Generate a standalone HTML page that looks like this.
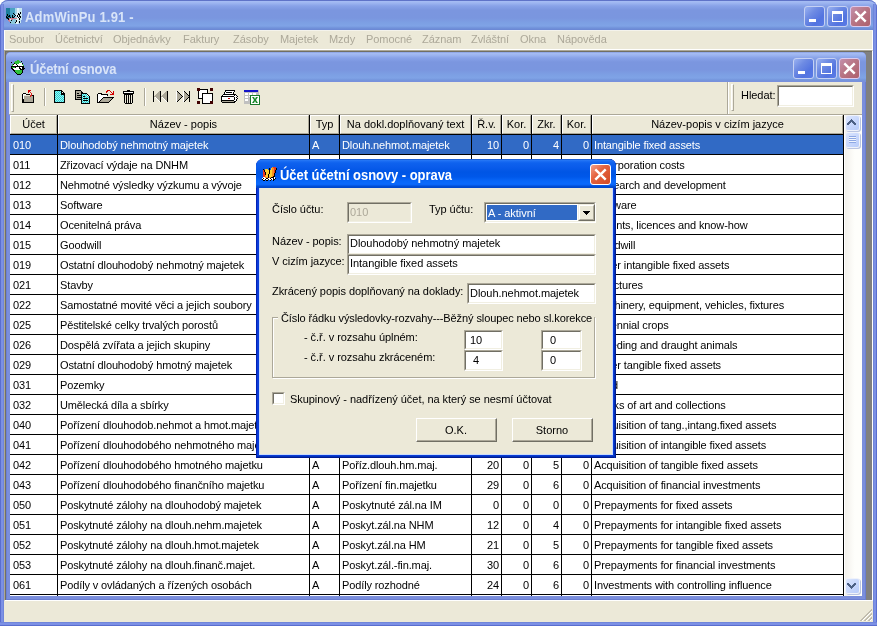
<!DOCTYPE html>
<html><head><meta charset="utf-8">
<style>
*{box-sizing:border-box}
html,body{margin:0;padding:0}
body{width:877px;height:626px;overflow:hidden;position:relative;background:#fff;font-family:"Liberation Sans",sans-serif;font-size:11px}
.a{position:absolute}
.t{position:absolute;white-space:nowrap;line-height:13px;font-size:11px;letter-spacing:-0.05px}
.b{font-weight:bold}
/* main window */
#main{left:0;top:0;width:877px;height:626px;background:#7388DA;border-radius:8px 8px 0 0;overflow:hidden}
#main::after{content:"";position:absolute;left:0;top:0;right:0;height:30px;border-radius:8px 8px 0 0;box-shadow:inset 0 1px 0 #5F73C8;pointer-events:none}
#mtitle{left:0;top:0;width:877px;height:30px;background:linear-gradient(to bottom,#6F86D5 0,#A6BDF4 1px,#9DB5F0 3px,#88A2E8 6px,#7B96DF 10px,#7A96DF 18px,#7DA0E4 23px,#7FA3E6 26px,#7192DA 28px,#6A86D3 30px)}
.lframe{background:linear-gradient(to right,#5D70CE 0,#7A8FE3 1px,#7C90E4 3px,#6E84D8 4px)}
.cap{color:#D8E4F8;font-weight:bold;font-size:13px;line-height:16px;letter-spacing:0;transform:scaleY(1.1);transform-origin:0 12.5px}
.xb{position:absolute;width:21px;height:21px;border-radius:3px;border:1px solid #C5D1F3}
.xb.bl{background:linear-gradient(135deg,#9AB2F1 0,#6E8BE3 35%,#5374E0 70%,#5A7BE6 100%)}
.xb.dx{background:linear-gradient(135deg,#F2A08A 0,#E5633F 40%,#D24A24 100%);border-color:#fff}
.xb.rd{background:linear-gradient(135deg,#C490AC 0,#B87686 45%,#AE606C 100%);border-color:#DCCBEE}
#menu{left:4px;top:30px;width:869px;height:20px;background:#ECE9D8;border-bottom:1px solid #fff;border-top:1px solid #F4F3EC;border-left:1px solid #fff;border-right:1px solid #fff}
.mi{color:#ACA899;top:33px}
#mdi{left:4px;top:50px;width:869px;height:551px;background:#808080;border-top:1px solid #ACA899;border-left:1px solid #ACA899;border-right:1px solid #fff;border-bottom:1px solid #fff;box-shadow:inset 1px 1px 0 #716F64}
/* child */
#child{left:6px;top:52px;width:860px;height:548px;background:#7A8EDC;border-radius:5px 5px 0 0;overflow:hidden;box-shadow:inset 1px 0 0 #6C80D4,inset -1px 0 0 #6A7ED2,inset 0 -1px 0 #6A7ED2}
#ctitle{left:0;top:0;width:860px;height:30px;background:linear-gradient(to bottom,#7D94DC 0,#A6BDF4 1px,#9DB5F0 3px,#88A2E8 6px,#7B96DF 10px,#7A96DF 18px,#7DA0E4 23px,#7FA3E6 26px,#7496DC 28px,#7A8EDC 30px)}
#toolbar{left:9px;top:82px;width:853px;height:33px;background:#ECE9D8;border-left:1px solid #E4EAF8}
.grip{position:absolute;width:3px;border-left:1px solid #fff;border-top:1px solid #fff;border-right:1px solid #ACA899;border-bottom:1px solid #ACA899;background:#F4F2E8}
.sep{position:absolute;width:2px;border-left:1px solid #ACA899;border-right:1px solid #fff}
/* grid */
#grid{left:10px;top:115px;width:852px;height:481px;background:#fff;overflow:hidden}
.hc{position:absolute;top:115px;height:19px;background:#ECE9D8;border-top:1px solid #fff;border-left:1px solid #fff;border-right:1px solid #ACA899;border-bottom:1px solid #ACA899;text-align:center;line-height:16px;color:#000}
.vl{position:absolute;top:0;width:1px;background:#000}
.hl{position:absolute;left:0;height:1px;background:#000}
.cell{position:absolute;white-space:nowrap;line-height:13px;color:#000;letter-spacing:-0.12px}
.r{text-align:right}
/* dialog */
#dlg{left:256px;top:159px;width:360px;height:299px;background:#0A3CD8;border-radius:7px 7px 0 0;overflow:hidden;box-shadow:inset 1px 0 0 #0020B8,inset -1px 0 0 #001A90,inset -2px 0 0 #0030B8,inset 0 -1px 0 #001A90,inset 0 -2px 0 #0030B8}
#dtitle{left:0;top:0;width:360px;height:29px;background:linear-gradient(to bottom,#0841B8 0,#2A7BF5 1px,#1C6EF4 2px,#0E62EE 4px,#0A5CEB 8px,#0055E5 13px,#0058EA 18px,#0866F8 22px,#0A6AFC 25px,#0A62F4 26px,#0050D8 27px,#0044C8 29px)}
#dclient{left:3px;top:29px;width:354px;height:267px;background:#ECE9D8;border:1px solid #CADCFA;border-top:0}
.edit{position:absolute;background:#fff;border-top:1px solid #ACA899;border-left:1px solid #ACA899;border-right:1px solid #fff;border-bottom:1px solid #fff}
.edit>div{position:absolute;left:0;top:0;right:0;bottom:0;border-top:1px solid #716F64;border-left:1px solid #716F64;border-right:1px solid #F1EFE2;border-bottom:1px solid #F1EFE2}
.btn{position:absolute;background:#ECE9D8;border-top:1px solid #fff;border-left:1px solid #fff;border-right:1px solid #716F64;border-bottom:1px solid #716F64}
.btn>div{position:absolute;left:0;top:0;right:0;bottom:0;border-right:1px solid #ACA899;border-bottom:1px solid #ACA899;text-align:center}
.sbb{position:absolute;width:13px;height:14px;border-radius:2px;background:linear-gradient(135deg,#DCE6FE 0,#C9D8FC 50%,#B8CCFA 100%);box-shadow:0 0 0 1px #F0F3FA,1px 1px 0 1px #BAC5E2}
#status{left:4px;top:601px;width:869px;height:21px;background:#ECE9D8}
</style></head><body><div id="wrap" style="position:absolute;left:0;top:0;width:877px;height:626px;overflow:hidden;will-change:transform">
<div id="main" class="a">
  <div id="mtitle" class="a"></div>
  <!-- app icon -->
  <svg class="a" style="left:6px;top:8px" width="16" height="16" viewBox="0 0 16 16" shape-rendering="crispEdges"><rect x="0" y="0" width="4" height="1" fill="#1C7D9B"/><rect x="4" y="0" width="5" height="1" fill="#4BA3C3"/><rect x="9" y="0" width="2" height="1" fill="#A7D4E6"/><rect x="11" y="0" width="2" height="1" fill="#E5F4F8"/><rect x="13" y="0" width="3" height="1" fill="#C6E8F2"/><rect x="0" y="1" width="4" height="1" fill="#1C7D9B"/><rect x="4" y="1" width="5" height="1" fill="#4BA3C3"/><rect x="9" y="1" width="2" height="1" fill="#A7D4E6"/><rect x="11" y="1" width="2" height="1" fill="#E5F4F8"/><rect x="13" y="1" width="3" height="1" fill="#C6E8F2"/><rect x="0" y="2" width="4" height="1" fill="#1C7D9B"/><rect x="4" y="2" width="5" height="1" fill="#4BA3C3"/><rect x="9" y="2" width="2" height="1" fill="#A7D4E6"/><rect x="11" y="2" width="2" height="1" fill="#E5F4F8"/><rect x="13" y="2" width="3" height="1" fill="#C6E8F2"/><rect x="0" y="3" width="4" height="1" fill="#1C7D9B"/><rect x="4" y="3" width="5" height="1" fill="#4BA3C3"/><rect x="9" y="3" width="2" height="1" fill="#A7D4E6"/><rect x="11" y="3" width="2" height="1" fill="#E5F4F8"/><rect x="13" y="3" width="3" height="1" fill="#C6E8F2"/><rect x="0" y="4" width="4" height="1" fill="#1C7D9B"/><rect x="4" y="4" width="5" height="1" fill="#4BA3C3"/><rect x="9" y="4" width="2" height="1" fill="#A7D4E6"/><rect x="11" y="4" width="2" height="1" fill="#E5F4F8"/><rect x="13" y="4" width="1" height="1" fill="#C6E8F2"/><rect x="14" y="4" width="1" height="1" fill="#000"/><rect x="15" y="4" width="1" height="1" fill="#C6E8F2"/><rect x="0" y="5" width="4" height="1" fill="#1C7D9B"/><rect x="4" y="5" width="3" height="1" fill="#4BA3C3"/><rect x="7" y="5" width="1" height="1" fill="#000"/><rect x="8" y="5" width="1" height="1" fill="#4BA3C3"/><rect x="9" y="5" width="2" height="1" fill="#A7D4E6"/><rect x="11" y="5" width="1" height="1" fill="#E5F4F8"/><rect x="12" y="5" width="1" height="1" fill="#000"/><rect x="13" y="5" width="1" height="1" fill="#C6E8F2"/><rect x="14" y="5" width="1" height="1" fill="#000"/><rect x="15" y="5" width="1" height="1" fill="#C6E8F2"/><rect x="0" y="6" width="1" height="1" fill="#1C7D9B"/><rect x="1" y="6" width="1" height="1" fill="#000"/><rect x="2" y="6" width="2" height="1" fill="#1C7D9B"/><rect x="4" y="6" width="4" height="1" fill="#4BA3C3"/><rect x="8" y="6" width="1" height="1" fill="#000"/><rect x="9" y="6" width="1" height="1" fill="#A7D4E6"/><rect x="10" y="6" width="2" height="1" fill="#E5F4F8"/><rect x="12" y="6" width="2" height="1" fill="#000"/><rect x="14" y="6" width="2" height="1" fill="#C6E8F2"/><rect x="0" y="7" width="1" height="1" fill="#1C7D9B"/><rect x="1" y="7" width="1" height="1" fill="#000"/><rect x="2" y="7" width="1" height="1" fill="#1C7D9B"/><rect x="3" y="7" width="1" height="1" fill="#000"/><rect x="4" y="7" width="1" height="1" fill="#1C7D9B"/><rect x="5" y="7" width="1" height="1" fill="#4BA3C3"/><rect x="6" y="7" width="1" height="1" fill="#000"/><rect x="7" y="7" width="2" height="1" fill="#4BA3C3"/><rect x="9" y="7" width="1" height="1" fill="#000"/><rect x="10" y="7" width="1" height="1" fill="#E5F4F8"/><rect x="11" y="7" width="1" height="1" fill="#000"/><rect x="12" y="7" width="1" height="1" fill="#E5F4F8"/><rect x="13" y="7" width="1" height="1" fill="#000"/><rect x="14" y="7" width="2" height="1" fill="#C6E8F2"/><rect x="0" y="8" width="1" height="1" fill="#000"/><rect x="1" y="8" width="1" height="1" fill="#1C7D9B"/><rect x="2" y="8" width="2" height="1" fill="#000"/><rect x="4" y="8" width="1" height="1" fill="#1C7D9B"/><rect x="5" y="8" width="1" height="1" fill="#4BA3C3"/><rect x="6" y="8" width="1" height="1" fill="#000"/><rect x="7" y="8" width="1" height="1" fill="#4BA3C3"/><rect x="8" y="8" width="1" height="1" fill="#000"/><rect x="9" y="8" width="2" height="1" fill="#A7D4E6"/><rect x="11" y="8" width="1" height="1" fill="#000"/><rect x="12" y="8" width="1" height="1" fill="#E5F4F8"/><rect x="13" y="8" width="2" height="1" fill="#000"/><rect x="15" y="8" width="1" height="1" fill="#C6E8F2"/><rect x="0" y="9" width="2" height="1" fill="#000"/><rect x="2" y="9" width="2" height="1" fill="#1C7D9B"/><rect x="4" y="9" width="1" height="1" fill="#000"/><rect x="5" y="9" width="1" height="1" fill="#4BA3C3"/><rect x="6" y="9" width="2" height="1" fill="#000"/><rect x="8" y="9" width="1" height="1" fill="#4BA3C3"/><rect x="9" y="9" width="2" height="1" fill="#A7D4E6"/><rect x="11" y="9" width="1" height="1" fill="#E5F4F8"/><rect x="12" y="9" width="1" height="1" fill="#000"/><rect x="13" y="9" width="1" height="1" fill="#E5F4F8"/><rect x="14" y="9" width="1" height="1" fill="#000"/><rect x="15" y="9" width="1" height="1" fill="#C6E8F2"/><rect x="0" y="10" width="1" height="1" fill="#1C7D9B"/><rect x="1" y="10" width="2" height="1" fill="#000"/><rect x="3" y="10" width="8" height="1" fill="#D08090"/><rect x="11" y="10" width="2" height="1" fill="#E5F4F8"/><rect x="13" y="10" width="1" height="1" fill="#000"/><rect x="14" y="10" width="2" height="1" fill="#C6E8F2"/><rect x="2" y="11" width="1" height="1" fill="#000"/><rect x="3" y="11" width="1" height="1" fill="#D08090"/><rect x="4" y="11" width="1" height="1" fill="#E5F4F8"/><rect x="5" y="11" width="2" height="1" fill="#D08090"/><rect x="7" y="11" width="3" height="1" fill="#8CC8DC"/><rect x="10" y="11" width="3" height="1" fill="#E5F4F8"/><rect x="13" y="11" width="1" height="1" fill="#000"/><rect x="14" y="11" width="2" height="1" fill="#C6E8F2"/><rect x="2" y="12" width="2" height="1" fill="#D08090"/><rect x="4" y="12" width="1" height="1" fill="#8CC8DC"/><rect x="5" y="12" width="1" height="1" fill="#000"/><rect x="6" y="12" width="4" height="1" fill="#8CC8DC"/><rect x="10" y="12" width="1" height="1" fill="#000"/><rect x="11" y="12" width="2" height="1" fill="#E5F4F8"/><rect x="13" y="12" width="2" height="1" fill="#C6E8F2"/><rect x="3" y="13" width="1" height="1" fill="#D08090"/><rect x="4" y="13" width="6" height="1" fill="#8CC8DC"/><rect x="10" y="13" width="1" height="1" fill="#000"/><rect x="11" y="13" width="1" height="1" fill="#E5F4F8"/><rect x="12" y="13" width="1" height="1" fill="#C6E8F2"/><rect x="13" y="13" width="1" height="1" fill="#000"/><rect x="14" y="13" width="1" height="1" fill="#C6E8F2"/><rect x="4" y="14" width="1" height="1" fill="#000"/><rect x="5" y="14" width="4" height="1" fill="#8CC8DC"/><rect x="9" y="14" width="1" height="1" fill="#000"/><rect x="10" y="14" width="2" height="1" fill="#E5F4F8"/><rect x="12" y="14" width="1" height="1" fill="#C6E8F2"/><rect x="13" y="14" width="1" height="1" fill="#000"/><rect x="14" y="14" width="1" height="1" fill="#C6E8F2"/><rect x="5" y="15" width="5" height="1" fill="#8CC8DC"/><rect x="10" y="15" width="2" height="1" fill="#E5F4F8"/><rect x="12" y="15" width="1" height="1" fill="#C6E8F2"/></svg>
  <div class="t cap" style="left:25px;top:10px;letter-spacing:0.18px">AdmWinPu 1.91 -</div>
  <div class="xb bl" style="left:804px;top:6px"><div class="a" style="left:4px;top:12px;width:7px;height:3px;background:#fff"></div></div>
  <div class="xb bl" style="left:827px;top:6px"><div class="a" style="left:4px;top:4px;width:11px;height:11px;border:1px solid #fff;border-top-width:3px"></div></div>
  <div class="xb rd" style="left:850px;top:6px">
    <svg class="a" style="left:3px;top:3px" width="13" height="13" viewBox="0 0 13 13"><path d="M1.3 1.3L11.7 11.7M11.7 1.3L1.3 11.7" stroke="#fff" stroke-width="2.4"/></svg>
  </div>
  <div id="menu" class="a"></div>
  <div class="t mi" style="left:9px">Soubor</div>
  <div class="t mi" style="left:55px">Účetnictví</div>
  <div class="t mi" style="left:113px">Objednávky</div>
  <div class="t mi" style="left:183px">Faktury</div>
  <div class="t mi" style="left:233px">Zásoby</div>
  <div class="t mi" style="left:280px">Majetek</div>
  <div class="t mi" style="left:329px">Mzdy</div>
  <div class="t mi" style="left:366px">Pomocné</div>
  <div class="t mi" style="left:422px">Záznam</div>
  <div class="t mi" style="left:471px">Zvláštní</div>
  <div class="t mi" style="left:520px">Okna</div>
  <div class="t mi" style="left:557px">Nápověda</div>
  <div id="mdi" class="a"></div>
  <div id="status" class="a"></div>
  <div class="a" style="left:0;top:4px;width:4px;height:622px;background:linear-gradient(to right,#5A6ECF 0,#5A6ECF 1px,#7B8FE4 1px,#7D92E6 3px,#7086DA 3px,#7086DA 4px)"></div>
  <div class="a" style="left:873px;top:4px;width:4px;height:622px;background:linear-gradient(to right,#7086DA 0,#7086DA 1px,#7D92E6 1px,#7B8FE4 3px,#5A6ECF 3px,#5A6ECF 4px)"></div>
  <div class="a" style="left:0;top:622px;width:877px;height:4px;background:linear-gradient(to bottom,#7086DA 0,#7086DA 1px,#7D92E6 1px,#7B8FE4 3px,#5A6ECF 3px,#5A6ECF 4px)"></div>
</div>

<div id="child" class="a">
  <div id="ctitle" class="a"></div>
</div>
<!-- child title content -->
<svg class="a" style="left:9px;top:60px" width="16" height="16" viewBox="0 0 16 16" shape-rendering="crispEdges"><rect x="8" y="0" width="2" height="1" fill="#2EC03A"/><rect x="6" y="1" width="5" height="1" fill="#2EC03A"/><rect x="12" y="1" width="1" height="1" fill="#000"/><rect x="2" y="2" width="1" height="1" fill="#000"/><rect x="5" y="2" width="7" height="1" fill="#2EC03A"/><rect x="5" y="3" width="1" height="1" fill="#000"/><rect x="6" y="3" width="4" height="1" fill="#2EC03A"/><rect x="10" y="3" width="3" height="1" fill="#fff"/><rect x="13" y="3" width="1" height="1" fill="#000"/><rect x="3" y="4" width="1" height="1" fill="#2EC03A"/><rect x="4" y="4" width="1" height="1" fill="#000"/><rect x="5" y="4" width="2" height="1" fill="#fff"/><rect x="7" y="4" width="1" height="1" fill="#000"/><rect x="8" y="4" width="5" height="1" fill="#fff"/><rect x="13" y="4" width="1" height="1" fill="#2EC03A"/><rect x="3" y="5" width="1" height="1" fill="#2EC03A"/><rect x="4" y="5" width="4" height="1" fill="#fff"/><rect x="8" y="5" width="1" height="1" fill="#000"/><rect x="9" y="5" width="5" height="1" fill="#fff"/><rect x="14" y="5" width="1" height="1" fill="#2EC03A"/><rect x="2" y="6" width="13" height="1" fill="#000"/><rect x="2" y="7" width="1" height="1" fill="#000"/><rect x="3" y="7" width="3" height="1" fill="#2EC03A"/><rect x="6" y="7" width="1" height="1" fill="#000"/><rect x="7" y="7" width="3" height="1" fill="#fff"/><rect x="10" y="7" width="1" height="1" fill="#000"/><rect x="11" y="7" width="2" height="1" fill="#fff"/><rect x="13" y="7" width="2" height="1" fill="#000"/><rect x="2" y="8" width="2" height="1" fill="#000"/><rect x="4" y="8" width="6" height="1" fill="#fff"/><rect x="10" y="8" width="2" height="1" fill="#000"/><rect x="12" y="8" width="1" height="1" fill="#fff"/><rect x="13" y="8" width="3" height="1" fill="#000"/><rect x="3" y="9" width="2" height="1" fill="#000"/><rect x="5" y="9" width="6" height="1" fill="#fff"/><rect x="11" y="9" width="4" height="1" fill="#000"/><rect x="4" y="10" width="2" height="1" fill="#000"/><rect x="6" y="10" width="7" height="1" fill="#2EC03A"/><rect x="13" y="10" width="1" height="1" fill="#000"/><rect x="5" y="11" width="1" height="1" fill="#000"/><rect x="6" y="11" width="7" height="1" fill="#2EC03A"/><rect x="13" y="11" width="1" height="1" fill="#000"/><rect x="6" y="12" width="1" height="1" fill="#000"/><rect x="7" y="12" width="6" height="1" fill="#2EC03A"/><rect x="13" y="12" width="1" height="1" fill="#000"/><rect x="7" y="13" width="1" height="1" fill="#000"/><rect x="8" y="13" width="4" height="1" fill="#2EC03A"/><rect x="12" y="13" width="1" height="1" fill="#000"/><rect x="8" y="14" width="4" height="1" fill="#000"/></svg>
<div class="t cap" style="left:30px;top:62px;letter-spacing:-0.2px">Účetní osnova</div>
<div class="xb bl" style="left:793px;top:58px"><div class="a" style="left:4px;top:12px;width:7px;height:3px;background:#fff"></div></div>
<div class="xb bl" style="left:816px;top:58px"><div class="a" style="left:4px;top:4px;width:11px;height:11px;border:1px solid #fff;border-top-width:3px"></div></div>
<div class="xb rd" style="left:839px;top:58px">
  <svg class="a" style="left:3px;top:3px" width="13" height="13" viewBox="0 0 13 13"><path d="M1.3 1.3L11.7 11.7M11.7 1.3L1.3 11.7" stroke="#fff" stroke-width="2.4"/></svg>
</div>

<div id="toolbar" class="a">
  <div class="grip" style="left:1px;top:2px;height:28px"></div>
  <div class="sep" style="left:34px;top:6px;height:18px"></div>
  <div class="sep" style="left:134px;top:6px;height:18px"></div>
</div>

<svg class="a" style="left:20px;top:88px" width="18" height="18" viewBox="0 0 18 18" shape-rendering="crispEdges">
  <rect x="4" y="8" width="9" height="6" fill="#ACA899"/>
  <path d="M3 5h3v1h4v1h-6v7h9v-7h1v8h-11v-9h0z" fill="#000"/>
  <rect x="2" y="6" width="1" height="9" fill="#000"/>
  <rect x="3" y="6" width="1" height="5" fill="#fff"/><rect x="4" y="6" width="2" height="1" fill="#fff"/>
  <rect x="12" y="7" width="2" height="1" fill="#000"/>
  <path d="M8 2h3v1h-1v1h-1v1h-1z" fill="#D40000"/>
  <path d="M10 4h1v1h1v3h-1v1h-1v-2h1v-2h-1z" fill="#D40000" opacity="0.85"/>
</svg>
<svg class="a" style="left:54px;top:90px" width="12" height="14" viewBox="0 0 12 14" shape-rendering="crispEdges">
  <defs><pattern id="cy" width="2" height="2" patternUnits="userSpaceOnUse"><rect width="2" height="2" fill="#8CFCFC"/><rect width="1" height="1" fill="#3CC8C8"/><rect x="1" y="1" width="1" height="1" fill="#3CC8C8"/></pattern></defs>
  <path d="M0 0h8v1h1v1h1v1h1v1h0v9h-11z" fill="#000"/>
  <path d="M1 1h6v4h3v7h-9z" fill="url(#cy)"/>
  <rect x="8" y="2" width="1" height="1" fill="#fff"/>
</svg>
<svg class="a" style="left:75px;top:90px" width="16" height="14" viewBox="0 0 16 14" shape-rendering="crispEdges">
  <path d="M0 0h6v1h1v1h1v8h-8z" fill="#000"/>
  <rect x="1" y="1" width="5" height="8" fill="#ACA899"/>
  <rect x="2" y="3" width="2" height="1" fill="#000"/><rect x="2" y="5" width="4" height="1" fill="#000"/><rect x="2" y="7" width="4" height="1" fill="#000"/>
  <path d="M6 3h6v1h1v1h1v1h1v8h-9z" fill="#000"/>
  <rect x="7" y="4" width="5" height="9" fill="url(#cy)"/><rect x="12" y="6" width="2" height="7" fill="url(#cy)"/>
  <rect x="8" y="6" width="2" height="1" fill="#000"/><rect x="8" y="8" width="5" height="1" fill="#000"/><rect x="8" y="10" width="5" height="1" fill="#000"/>
  <rect x="12" y="5" width="1" height="1" fill="#fff"/>
</svg>
<svg class="a" style="left:97px;top:89px" width="19" height="16" viewBox="0 0 19 16" shape-rendering="crispEdges">
  <path d="M1 4h4v1h6v2h-1v-1h-6v1h-2z" fill="#000"/>
  <rect x="0" y="5" width="1" height="9" fill="#000"/>
  <rect x="1" y="5" width="3" height="1" fill="#fff"/><rect x="1" y="6" width="9" height="2" fill="#fff"/><rect x="1" y="8" width="5" height="5" fill="#fff"/>
  <path d="M5 8h12v1h-1v1h-1v1h-1v1h-1v1h-1v1h-11v-1h1v-1h1v-1h1v-1h1v-1h1z" fill="#000"/>
  <path d="M6 9h9v1h-1v1h-1v1h-1v1h-9v-1h1v-1h1v-1h1z" fill="#ACA899"/>
  <path d="M9 2h1v-1h3v1h1v1h1v1h1v-2h1v4h-4v-1h2v-1h-1v-1h-1v-1h-2v1h-1v1h-1z" fill="#D40000"/>
</svg>
<svg class="a" style="left:122px;top:89px" width="13" height="16" viewBox="0 0 13 16" shape-rendering="crispEdges">
  <rect x="5" y="1" width="3" height="1" fill="#000"/>
  <path d="M1 2h11v3h-11z" fill="#000"/>
  <rect x="2" y="3" width="9" height="1" fill="#fff"/>
  <path d="M2 5h9v9h-1v1h-7v-1h-1z" fill="#000"/>
  <rect x="3" y="6" width="7" height="8" fill="#ECE9D8"/>
  <rect x="4" y="6" width="1" height="8" fill="#000"/><rect x="6" y="6" width="1" height="8" fill="#000"/><rect x="8" y="6" width="1" height="8" fill="#000"/>
</svg>
<svg class="a" style="left:153px;top:91px" width="15" height="11" viewBox="0 0 15 11" shape-rendering="crispEdges"><rect x="0" y="0" width="1" height="1" fill="#000"/><rect x="6" y="0" width="1" height="1" fill="#ACA899"/><rect x="7" y="0" width="1" height="1" fill="#000"/><rect x="13" y="0" width="1" height="1" fill="#ACA899"/><rect x="14" y="0" width="1" height="1" fill="#000"/><rect x="0" y="1" width="1" height="1" fill="#000"/><rect x="5" y="1" width="2" height="1" fill="#ACA899"/><rect x="7" y="1" width="1" height="1" fill="#000"/><rect x="12" y="1" width="2" height="1" fill="#ACA899"/><rect x="14" y="1" width="1" height="1" fill="#000"/><rect x="0" y="2" width="1" height="1" fill="#000"/><rect x="4" y="2" width="3" height="1" fill="#ACA899"/><rect x="7" y="2" width="1" height="1" fill="#000"/><rect x="11" y="2" width="3" height="1" fill="#ACA899"/><rect x="14" y="2" width="1" height="1" fill="#000"/><rect x="0" y="3" width="1" height="1" fill="#000"/><rect x="3" y="3" width="4" height="1" fill="#ACA899"/><rect x="7" y="3" width="1" height="1" fill="#000"/><rect x="10" y="3" width="4" height="1" fill="#ACA899"/><rect x="14" y="3" width="1" height="1" fill="#000"/><rect x="0" y="4" width="1" height="1" fill="#000"/><rect x="2" y="4" width="5" height="1" fill="#ACA899"/><rect x="7" y="4" width="1" height="1" fill="#000"/><rect x="9" y="4" width="5" height="1" fill="#ACA899"/><rect x="14" y="4" width="1" height="1" fill="#000"/><rect x="0" y="5" width="1" height="1" fill="#000"/><rect x="1" y="5" width="6" height="1" fill="#ACA899"/><rect x="7" y="5" width="1" height="1" fill="#000"/><rect x="8" y="5" width="6" height="1" fill="#ACA899"/><rect x="14" y="5" width="1" height="1" fill="#000"/><rect x="0" y="6" width="1" height="1" fill="#000"/><rect x="2" y="6" width="1" height="1" fill="#fff"/><rect x="3" y="6" width="4" height="1" fill="#ACA899"/><rect x="7" y="6" width="1" height="1" fill="#000"/><rect x="9" y="6" width="1" height="1" fill="#fff"/><rect x="10" y="6" width="4" height="1" fill="#ACA899"/><rect x="14" y="6" width="1" height="1" fill="#000"/><rect x="0" y="7" width="1" height="1" fill="#000"/><rect x="3" y="7" width="1" height="1" fill="#fff"/><rect x="4" y="7" width="3" height="1" fill="#ACA899"/><rect x="7" y="7" width="1" height="1" fill="#000"/><rect x="10" y="7" width="1" height="1" fill="#fff"/><rect x="11" y="7" width="3" height="1" fill="#ACA899"/><rect x="14" y="7" width="1" height="1" fill="#000"/><rect x="0" y="8" width="1" height="1" fill="#000"/><rect x="4" y="8" width="1" height="1" fill="#fff"/><rect x="5" y="8" width="2" height="1" fill="#ACA899"/><rect x="7" y="8" width="1" height="1" fill="#000"/><rect x="11" y="8" width="1" height="1" fill="#fff"/><rect x="12" y="8" width="2" height="1" fill="#ACA899"/><rect x="14" y="8" width="1" height="1" fill="#000"/><rect x="0" y="9" width="1" height="1" fill="#000"/><rect x="5" y="9" width="1" height="1" fill="#fff"/><rect x="6" y="9" width="1" height="1" fill="#ACA899"/><rect x="7" y="9" width="1" height="1" fill="#000"/><rect x="12" y="9" width="1" height="1" fill="#fff"/><rect x="13" y="9" width="1" height="1" fill="#ACA899"/><rect x="14" y="9" width="1" height="1" fill="#000"/><rect x="0" y="10" width="1" height="1" fill="#000"/><rect x="6" y="10" width="1" height="1" fill="#fff"/><rect x="7" y="10" width="1" height="1" fill="#000"/><rect x="13" y="10" width="1" height="1" fill="#fff"/><rect x="14" y="10" width="1" height="1" fill="#000"/></svg>
<svg class="a" style="left:176px;top:91px" width="14" height="11" viewBox="0 0 14 11" shape-rendering="crispEdges"><rect x="0" y="0" width="1" height="1" fill="#fff"/><rect x="1" y="0" width="1" height="1" fill="#000"/><rect x="7" y="0" width="1" height="1" fill="#fff"/><rect x="8" y="0" width="1" height="1" fill="#000"/><rect x="13" y="0" width="1" height="1" fill="#000"/><rect x="0" y="1" width="1" height="1" fill="#fff"/><rect x="1" y="1" width="1" height="1" fill="#ACA899"/><rect x="2" y="1" width="1" height="1" fill="#000"/><rect x="7" y="1" width="1" height="1" fill="#fff"/><rect x="8" y="1" width="1" height="1" fill="#ACA899"/><rect x="9" y="1" width="1" height="1" fill="#000"/><rect x="13" y="1" width="1" height="1" fill="#000"/><rect x="0" y="2" width="1" height="1" fill="#fff"/><rect x="1" y="2" width="2" height="1" fill="#ACA899"/><rect x="3" y="2" width="1" height="1" fill="#000"/><rect x="7" y="2" width="1" height="1" fill="#fff"/><rect x="8" y="2" width="2" height="1" fill="#ACA899"/><rect x="10" y="2" width="1" height="1" fill="#000"/><rect x="13" y="2" width="1" height="1" fill="#000"/><rect x="0" y="3" width="1" height="1" fill="#fff"/><rect x="1" y="3" width="3" height="1" fill="#ACA899"/><rect x="4" y="3" width="1" height="1" fill="#000"/><rect x="7" y="3" width="1" height="1" fill="#fff"/><rect x="8" y="3" width="3" height="1" fill="#ACA899"/><rect x="11" y="3" width="1" height="1" fill="#000"/><rect x="13" y="3" width="1" height="1" fill="#000"/><rect x="0" y="4" width="1" height="1" fill="#fff"/><rect x="1" y="4" width="4" height="1" fill="#ACA899"/><rect x="5" y="4" width="1" height="1" fill="#000"/><rect x="7" y="4" width="1" height="1" fill="#fff"/><rect x="8" y="4" width="4" height="1" fill="#ACA899"/><rect x="12" y="4" width="2" height="1" fill="#000"/><rect x="0" y="5" width="1" height="1" fill="#fff"/><rect x="1" y="5" width="5" height="1" fill="#ACA899"/><rect x="6" y="5" width="1" height="1" fill="#000"/><rect x="7" y="5" width="1" height="1" fill="#fff"/><rect x="8" y="5" width="5" height="1" fill="#ACA899"/><rect x="13" y="5" width="1" height="1" fill="#000"/><rect x="0" y="6" width="1" height="1" fill="#fff"/><rect x="1" y="6" width="4" height="1" fill="#ACA899"/><rect x="5" y="6" width="1" height="1" fill="#000"/><rect x="7" y="6" width="1" height="1" fill="#fff"/><rect x="8" y="6" width="4" height="1" fill="#ACA899"/><rect x="12" y="6" width="2" height="1" fill="#000"/><rect x="0" y="7" width="1" height="1" fill="#fff"/><rect x="1" y="7" width="3" height="1" fill="#ACA899"/><rect x="4" y="7" width="1" height="1" fill="#000"/><rect x="7" y="7" width="1" height="1" fill="#fff"/><rect x="8" y="7" width="3" height="1" fill="#ACA899"/><rect x="11" y="7" width="1" height="1" fill="#000"/><rect x="13" y="7" width="1" height="1" fill="#000"/><rect x="0" y="8" width="1" height="1" fill="#fff"/><rect x="1" y="8" width="2" height="1" fill="#ACA899"/><rect x="3" y="8" width="1" height="1" fill="#000"/><rect x="7" y="8" width="1" height="1" fill="#fff"/><rect x="8" y="8" width="2" height="1" fill="#ACA899"/><rect x="10" y="8" width="1" height="1" fill="#000"/><rect x="13" y="8" width="1" height="1" fill="#000"/><rect x="0" y="9" width="1" height="1" fill="#fff"/><rect x="1" y="9" width="1" height="1" fill="#ACA899"/><rect x="2" y="9" width="1" height="1" fill="#000"/><rect x="7" y="9" width="1" height="1" fill="#fff"/><rect x="8" y="9" width="1" height="1" fill="#ACA899"/><rect x="9" y="9" width="1" height="1" fill="#000"/><rect x="13" y="9" width="1" height="1" fill="#000"/><rect x="0" y="10" width="1" height="1" fill="#fff"/><rect x="1" y="10" width="1" height="1" fill="#000"/><rect x="7" y="10" width="1" height="1" fill="#fff"/><rect x="8" y="10" width="1" height="1" fill="#000"/><rect x="13" y="10" width="1" height="1" fill="#000"/></svg>
<svg class="a" style="left:197px;top:88px" width="17" height="17" viewBox="0 0 17 17" shape-rendering="crispEdges">
  <rect x="1" y="1" width="9" height="9" fill="#fff" stroke="#000" stroke-width="1" transform="translate(0.5 0.5)" shape-rendering="auto"/>
  <rect x="5" y="5" width="10" height="10" fill="#fff" stroke="#000" stroke-width="1" transform="translate(0.5 0.5)" shape-rendering="auto"/>
  <rect x="0" y="0" width="3" height="3" fill="#400000"/><rect x="13" y="0" width="3" height="3" fill="#400000"/>
  <rect x="0" y="13" width="3" height="3" fill="#400000"/><rect x="13" y="13" width="3" height="3" fill="#400000"/>
</svg>
<svg class="a" style="left:221px;top:90px" width="17" height="13" viewBox="0 0 17 13" shape-rendering="crispEdges"><rect x="4" y="0" width="10" height="1" fill="#000"/><rect x="4" y="1" width="1" height="1" fill="#000"/><rect x="5" y="1" width="8" height="1" fill="#fff"/><rect x="13" y="1" width="1" height="1" fill="#000"/><rect x="3" y="2" width="1" height="1" fill="#000"/><rect x="4" y="2" width="1" height="1" fill="#fff"/><rect x="5" y="2" width="6" height="1" fill="#000"/><rect x="11" y="2" width="1" height="1" fill="#fff"/><rect x="12" y="2" width="1" height="1" fill="#000"/><rect x="3" y="3" width="1" height="1" fill="#000"/><rect x="4" y="3" width="8" height="1" fill="#fff"/><rect x="12" y="3" width="1" height="1" fill="#000"/><rect x="2" y="4" width="13" height="1" fill="#000"/><rect x="1" y="5" width="1" height="1" fill="#000"/><rect x="2" y="5" width="11" height="1" fill="#fff"/><rect x="13" y="5" width="1" height="1" fill="#000"/><rect x="14" y="5" width="1" height="1" fill="#fff"/><rect x="15" y="5" width="1" height="1" fill="#000"/><rect x="0" y="6" width="13" height="1" fill="#000"/><rect x="13" y="6" width="3" height="1" fill="#fff"/><rect x="16" y="6" width="1" height="1" fill="#000"/><rect x="0" y="7" width="1" height="1" fill="#000"/><rect x="1" y="7" width="12" height="1" fill="#fff"/><rect x="13" y="7" width="1" height="1" fill="#000"/><rect x="14" y="7" width="1" height="1" fill="#fff"/><rect x="15" y="7" width="1" height="1" fill="#000"/><rect x="0" y="8" width="1" height="1" fill="#000"/><rect x="1" y="8" width="6" height="1" fill="#fff"/><rect x="7" y="8" width="2" height="1" fill="#C00000"/><rect x="9" y="8" width="4" height="1" fill="#fff"/><rect x="13" y="8" width="1" height="1" fill="#000"/><rect x="14" y="8" width="2" height="1" fill="#fff"/><rect x="16" y="8" width="1" height="1" fill="#000"/><rect x="0" y="9" width="1" height="1" fill="#000"/><rect x="1" y="9" width="12" height="1" fill="#fff"/><rect x="13" y="9" width="1" height="1" fill="#000"/><rect x="14" y="9" width="1" height="1" fill="#fff"/><rect x="15" y="9" width="1" height="1" fill="#000"/><rect x="0" y="10" width="13" height="1" fill="#000"/><rect x="13" y="10" width="2" height="1" fill="#fff"/><rect x="15" y="10" width="1" height="1" fill="#000"/><rect x="0" y="11" width="1" height="1" fill="#000"/><rect x="1" y="11" width="12" height="1" fill="#ACA899"/><rect x="13" y="11" width="2" height="1" fill="#000"/><rect x="1" y="12" width="13" height="1" fill="#000"/></svg>
<svg class="a" style="left:243px;top:89px" width="18" height="17" viewBox="0 0 18 17" shape-rendering="crispEdges">
  <rect x="1" y="1" width="15" height="14" fill="#C0C0C0"/>
  <rect x="1" y="1" width="14" height="2" fill="#1414C8"/>
  <rect x="2" y="4" width="3" height="2" fill="#fff"/><rect x="6" y="4" width="3" height="2" fill="#fff"/><rect x="10" y="4" width="3" height="2" fill="#fff"/>
  <rect x="2" y="7" width="3" height="2" fill="#fff"/><rect x="2" y="10" width="3" height="2" fill="#fff"/><rect x="6" y="7" width="3" height="1" fill="#fff"/>
  <rect x="7" y="6" width="10" height="10" fill="#1A7A2A"/>
  <rect x="8" y="7" width="8" height="8" fill="#fff"/>
  <path d="M9 8h2l1 2l1-2h2l-2 3l2 3h-2l-1-2l-1 2h-2l2-3z" fill="#1A8A2A" shape-rendering="auto"/>
</svg>

<div class="sep" style="left:727px;top:82px;height:32px;position:absolute"></div>
<div class="grip" style="left:731px;top:84px;height:27px"></div>
<div class="t" style="left:741px;top:89px;color:#000">Hledat:</div>
<div class="edit" style="left:777px;top:85px;width:77px;height:22px"><div></div></div>
<div class="a" style="left:9px;top:114px;width:853px;height:1px;background:#ACA899"></div>

<div id="grid" class="a"></div>
<div class="hc" style="left:10px;width:47px">Účet</div>
<div class="vl" style="left:57px;top:115px;height:481px"></div>
<div class="hc" style="left:58px;width:251px">Název - popis</div>
<div class="vl" style="left:309px;top:115px;height:481px"></div>
<div class="hc" style="left:310px;width:29px">Typ</div>
<div class="vl" style="left:339px;top:115px;height:481px"></div>
<div class="hc" style="left:340px;width:131px">Na dokl.doplňovaný text</div>
<div class="vl" style="left:471px;top:115px;height:481px"></div>
<div class="hc" style="left:472px;width:29px">Ř.v.</div>
<div class="vl" style="left:501px;top:115px;height:481px"></div>
<div class="hc" style="left:502px;width:29px">Kor.</div>
<div class="vl" style="left:531px;top:115px;height:481px"></div>
<div class="hc" style="left:532px;width:29px">Zkr.</div>
<div class="vl" style="left:561px;top:115px;height:481px"></div>
<div class="hc" style="left:562px;width:29px">Kor.</div>
<div class="vl" style="left:591px;top:115px;height:481px"></div>
<div class="hc" style="left:592px;width:251px">Název-popis v cizím jazyce</div>
<div class="vl" style="left:843px;top:115px;height:481px"></div>
<div class="hl" style="top:134px;left:10px;width:834px"></div>
<div class="hl" style="top:154px;left:10px;width:834px"></div>
<div class="hl" style="top:174px;left:10px;width:834px"></div>
<div class="hl" style="top:194px;left:10px;width:834px"></div>
<div class="hl" style="top:214px;left:10px;width:834px"></div>
<div class="hl" style="top:234px;left:10px;width:834px"></div>
<div class="hl" style="top:254px;left:10px;width:834px"></div>
<div class="hl" style="top:274px;left:10px;width:834px"></div>
<div class="hl" style="top:294px;left:10px;width:834px"></div>
<div class="hl" style="top:314px;left:10px;width:834px"></div>
<div class="hl" style="top:334px;left:10px;width:834px"></div>
<div class="hl" style="top:354px;left:10px;width:834px"></div>
<div class="hl" style="top:374px;left:10px;width:834px"></div>
<div class="hl" style="top:394px;left:10px;width:834px"></div>
<div class="hl" style="top:414px;left:10px;width:834px"></div>
<div class="hl" style="top:434px;left:10px;width:834px"></div>
<div class="hl" style="top:454px;left:10px;width:834px"></div>
<div class="hl" style="top:474px;left:10px;width:834px"></div>
<div class="hl" style="top:494px;left:10px;width:834px"></div>
<div class="hl" style="top:514px;left:10px;width:834px"></div>
<div class="hl" style="top:534px;left:10px;width:834px"></div>
<div class="hl" style="top:554px;left:10px;width:834px"></div>
<div class="hl" style="top:574px;left:10px;width:834px"></div>
<div class="hl" style="top:594px;left:10px;width:834px"></div>
<div class="a" style="left:10px;top:135px;width:833px;height:19px;background:#316AC5"></div>
<div class="vl" style="left:57px;top:135px;height:19px"></div>
<div class="vl" style="left:309px;top:135px;height:19px"></div>
<div class="vl" style="left:339px;top:135px;height:19px"></div>
<div class="vl" style="left:471px;top:135px;height:19px"></div>
<div class="vl" style="left:501px;top:135px;height:19px"></div>
<div class="vl" style="left:531px;top:135px;height:19px"></div>
<div class="vl" style="left:561px;top:135px;height:19px"></div>
<div class="vl" style="left:591px;top:135px;height:19px"></div>
<div class="cell" style="left:13px;top:139px;width:45px;overflow:hidden;color:#fff">010</div>
<div class="cell" style="left:60px;top:139px;width:249px;overflow:hidden;color:#fff">Dlouhodobý nehmotný majetek</div>
<div class="cell" style="left:312px;top:139px;width:27px;overflow:hidden;color:#fff">A</div>
<div class="cell" style="left:342px;top:139px;width:129px;overflow:hidden;color:#fff">Dlouh.nehmot.majetek</div>
<div class="cell r" style="left:472px;width:27px;top:139px;color:#fff">10</div>
<div class="cell r" style="left:502px;width:27px;top:139px;color:#fff">0</div>
<div class="cell r" style="left:532px;width:27px;top:139px;color:#fff">4</div>
<div class="cell r" style="left:562px;width:27px;top:139px;color:#fff">0</div>
<div class="cell" style="left:594px;top:139px;width:249px;overflow:hidden;color:#fff">Intangible fixed assets</div>
<div class="cell" style="left:13px;top:159px;width:45px;overflow:hidden;color:#000">011</div>
<div class="cell" style="left:60px;top:159px;width:249px;overflow:hidden;color:#000">Zřizovací výdaje na DNHM</div>
<div class="cell" style="left:312px;top:159px;width:27px;overflow:hidden;color:#000">A</div>
<div class="cell" style="left:342px;top:159px;width:129px;overflow:hidden;color:#000">Zřizovací výdaje</div>
<div class="cell r" style="left:472px;width:27px;top:159px;color:#000">0</div>
<div class="cell r" style="left:502px;width:27px;top:159px;color:#000">0</div>
<div class="cell r" style="left:532px;width:27px;top:159px;color:#000">4</div>
<div class="cell r" style="left:562px;width:27px;top:159px;color:#000">0</div>
<div class="cell" style="left:594px;top:159px;width:249px;overflow:hidden;color:#000">Incorporation costs</div>
<div class="cell" style="left:13px;top:179px;width:45px;overflow:hidden;color:#000">012</div>
<div class="cell" style="left:60px;top:179px;width:249px;overflow:hidden;color:#000">Nehmotné výsledky výzkumu a vývoje</div>
<div class="cell" style="left:312px;top:179px;width:27px;overflow:hidden;color:#000">A</div>
<div class="cell" style="left:342px;top:179px;width:129px;overflow:hidden;color:#000">Nehm.výsl.výzkumu</div>
<div class="cell r" style="left:472px;width:27px;top:179px;color:#000">10</div>
<div class="cell r" style="left:502px;width:27px;top:179px;color:#000">0</div>
<div class="cell r" style="left:532px;width:27px;top:179px;color:#000">4</div>
<div class="cell r" style="left:562px;width:27px;top:179px;color:#000">0</div>
<div class="cell" style="left:594px;top:179px;width:249px;overflow:hidden;color:#000">Research and development</div>
<div class="cell" style="left:13px;top:199px;width:45px;overflow:hidden;color:#000">013</div>
<div class="cell" style="left:60px;top:199px;width:249px;overflow:hidden;color:#000">Software</div>
<div class="cell" style="left:312px;top:199px;width:27px;overflow:hidden;color:#000">A</div>
<div class="cell" style="left:342px;top:199px;width:129px;overflow:hidden;color:#000">Software</div>
<div class="cell r" style="left:472px;width:27px;top:199px;color:#000">10</div>
<div class="cell r" style="left:502px;width:27px;top:199px;color:#000">0</div>
<div class="cell r" style="left:532px;width:27px;top:199px;color:#000">4</div>
<div class="cell r" style="left:562px;width:27px;top:199px;color:#000">0</div>
<div class="cell" style="left:594px;top:199px;width:249px;overflow:hidden;color:#000">Software</div>
<div class="cell" style="left:13px;top:219px;width:45px;overflow:hidden;color:#000">014</div>
<div class="cell" style="left:60px;top:219px;width:249px;overflow:hidden;color:#000">Ocenitelná práva</div>
<div class="cell" style="left:312px;top:219px;width:27px;overflow:hidden;color:#000">A</div>
<div class="cell" style="left:342px;top:219px;width:129px;overflow:hidden;color:#000">Ocenitelná práva</div>
<div class="cell r" style="left:472px;width:27px;top:219px;color:#000">10</div>
<div class="cell r" style="left:502px;width:27px;top:219px;color:#000">0</div>
<div class="cell r" style="left:532px;width:27px;top:219px;color:#000">4</div>
<div class="cell r" style="left:562px;width:27px;top:219px;color:#000">0</div>
<div class="cell" style="left:594px;top:219px;width:249px;overflow:hidden;color:#000">Patents, licences and know-how</div>
<div class="cell" style="left:13px;top:239px;width:45px;overflow:hidden;color:#000">015</div>
<div class="cell" style="left:60px;top:239px;width:249px;overflow:hidden;color:#000">Goodwill</div>
<div class="cell" style="left:312px;top:239px;width:27px;overflow:hidden;color:#000">A</div>
<div class="cell" style="left:342px;top:239px;width:129px;overflow:hidden;color:#000">Goodwill</div>
<div class="cell r" style="left:472px;width:27px;top:239px;color:#000">10</div>
<div class="cell r" style="left:502px;width:27px;top:239px;color:#000">0</div>
<div class="cell r" style="left:532px;width:27px;top:239px;color:#000">4</div>
<div class="cell r" style="left:562px;width:27px;top:239px;color:#000">0</div>
<div class="cell" style="left:594px;top:239px;width:249px;overflow:hidden;color:#000">Goodwill</div>
<div class="cell" style="left:13px;top:259px;width:45px;overflow:hidden;color:#000">019</div>
<div class="cell" style="left:60px;top:259px;width:249px;overflow:hidden;color:#000">Ostatní dlouhodobý nehmotný majetek</div>
<div class="cell" style="left:312px;top:259px;width:27px;overflow:hidden;color:#000">A</div>
<div class="cell" style="left:342px;top:259px;width:129px;overflow:hidden;color:#000">Ost.DNM</div>
<div class="cell r" style="left:472px;width:27px;top:259px;color:#000">10</div>
<div class="cell r" style="left:502px;width:27px;top:259px;color:#000">0</div>
<div class="cell r" style="left:532px;width:27px;top:259px;color:#000">4</div>
<div class="cell r" style="left:562px;width:27px;top:259px;color:#000">0</div>
<div class="cell" style="left:594px;top:259px;width:249px;overflow:hidden;color:#000">Other intangible fixed assets</div>
<div class="cell" style="left:13px;top:279px;width:45px;overflow:hidden;color:#000">021</div>
<div class="cell" style="left:60px;top:279px;width:249px;overflow:hidden;color:#000">Stavby</div>
<div class="cell" style="left:312px;top:279px;width:27px;overflow:hidden;color:#000">A</div>
<div class="cell" style="left:342px;top:279px;width:129px;overflow:hidden;color:#000">Stavby</div>
<div class="cell r" style="left:472px;width:27px;top:279px;color:#000">11</div>
<div class="cell r" style="left:502px;width:27px;top:279px;color:#000">0</div>
<div class="cell r" style="left:532px;width:27px;top:279px;color:#000">5</div>
<div class="cell r" style="left:562px;width:27px;top:279px;color:#000">0</div>
<div class="cell" style="left:594px;top:279px;width:249px;overflow:hidden;color:#000">Structures</div>
<div class="cell" style="left:13px;top:299px;width:45px;overflow:hidden;color:#000">022</div>
<div class="cell" style="left:60px;top:299px;width:249px;overflow:hidden;color:#000">Samostatné movité věci a jejich soubory</div>
<div class="cell" style="left:312px;top:299px;width:27px;overflow:hidden;color:#000">A</div>
<div class="cell" style="left:342px;top:299px;width:129px;overflow:hidden;color:#000">Sam.mov.věci</div>
<div class="cell r" style="left:472px;width:27px;top:299px;color:#000">12</div>
<div class="cell r" style="left:502px;width:27px;top:299px;color:#000">0</div>
<div class="cell r" style="left:532px;width:27px;top:299px;color:#000">5</div>
<div class="cell r" style="left:562px;width:27px;top:299px;color:#000">0</div>
<div class="cell" style="left:594px;top:299px;width:249px;overflow:hidden;color:#000">Machinery, equipment, vehicles, fixtures</div>
<div class="cell" style="left:13px;top:319px;width:45px;overflow:hidden;color:#000">025</div>
<div class="cell" style="left:60px;top:319px;width:249px;overflow:hidden;color:#000">Pěstitelské celky trvalých porostů</div>
<div class="cell" style="left:312px;top:319px;width:27px;overflow:hidden;color:#000">A</div>
<div class="cell" style="left:342px;top:319px;width:129px;overflow:hidden;color:#000">Pěst.celky</div>
<div class="cell r" style="left:472px;width:27px;top:319px;color:#000">13</div>
<div class="cell r" style="left:502px;width:27px;top:319px;color:#000">0</div>
<div class="cell r" style="left:532px;width:27px;top:319px;color:#000">5</div>
<div class="cell r" style="left:562px;width:27px;top:319px;color:#000">0</div>
<div class="cell" style="left:594px;top:319px;width:249px;overflow:hidden;color:#000">Perennial crops</div>
<div class="cell" style="left:13px;top:339px;width:45px;overflow:hidden;color:#000">026</div>
<div class="cell" style="left:60px;top:339px;width:249px;overflow:hidden;color:#000">Dospělá zvířata a jejich skupiny</div>
<div class="cell" style="left:312px;top:339px;width:27px;overflow:hidden;color:#000">A</div>
<div class="cell" style="left:342px;top:339px;width:129px;overflow:hidden;color:#000">Dosp.zvířata</div>
<div class="cell r" style="left:472px;width:27px;top:339px;color:#000">14</div>
<div class="cell r" style="left:502px;width:27px;top:339px;color:#000">0</div>
<div class="cell r" style="left:532px;width:27px;top:339px;color:#000">5</div>
<div class="cell r" style="left:562px;width:27px;top:339px;color:#000">0</div>
<div class="cell" style="left:594px;top:339px;width:249px;overflow:hidden;color:#000">Breeding and draught animals</div>
<div class="cell" style="left:13px;top:359px;width:45px;overflow:hidden;color:#000">029</div>
<div class="cell" style="left:60px;top:359px;width:249px;overflow:hidden;color:#000">Ostatní dlouhodobý hmotný majetek</div>
<div class="cell" style="left:312px;top:359px;width:27px;overflow:hidden;color:#000">A</div>
<div class="cell" style="left:342px;top:359px;width:129px;overflow:hidden;color:#000">Ost.DHM</div>
<div class="cell r" style="left:472px;width:27px;top:359px;color:#000">15</div>
<div class="cell r" style="left:502px;width:27px;top:359px;color:#000">0</div>
<div class="cell r" style="left:532px;width:27px;top:359px;color:#000">5</div>
<div class="cell r" style="left:562px;width:27px;top:359px;color:#000">0</div>
<div class="cell" style="left:594px;top:359px;width:249px;overflow:hidden;color:#000">Other tangible fixed assets</div>
<div class="cell" style="left:13px;top:379px;width:45px;overflow:hidden;color:#000">031</div>
<div class="cell" style="left:60px;top:379px;width:249px;overflow:hidden;color:#000">Pozemky</div>
<div class="cell" style="left:312px;top:379px;width:27px;overflow:hidden;color:#000">A</div>
<div class="cell" style="left:342px;top:379px;width:129px;overflow:hidden;color:#000">Pozemky</div>
<div class="cell r" style="left:472px;width:27px;top:379px;color:#000">16</div>
<div class="cell r" style="left:502px;width:27px;top:379px;color:#000">0</div>
<div class="cell r" style="left:532px;width:27px;top:379px;color:#000">5</div>
<div class="cell r" style="left:562px;width:27px;top:379px;color:#000">0</div>
<div class="cell" style="left:594px;top:379px;width:249px;overflow:hidden;color:#000">Land</div>
<div class="cell" style="left:13px;top:399px;width:45px;overflow:hidden;color:#000">032</div>
<div class="cell" style="left:60px;top:399px;width:249px;overflow:hidden;color:#000">Umělecká díla a sbírky</div>
<div class="cell" style="left:312px;top:399px;width:27px;overflow:hidden;color:#000">A</div>
<div class="cell" style="left:342px;top:399px;width:129px;overflow:hidden;color:#000">Uměl.díla</div>
<div class="cell r" style="left:472px;width:27px;top:399px;color:#000">17</div>
<div class="cell r" style="left:502px;width:27px;top:399px;color:#000">0</div>
<div class="cell r" style="left:532px;width:27px;top:399px;color:#000">5</div>
<div class="cell r" style="left:562px;width:27px;top:399px;color:#000">0</div>
<div class="cell" style="left:594px;top:399px;width:249px;overflow:hidden;color:#000">Works of art and collections</div>
<div class="cell" style="left:13px;top:419px;width:45px;overflow:hidden;color:#000">040</div>
<div class="cell" style="left:60px;top:419px;width:249px;overflow:hidden;color:#000">Pořízení dlouhodob.nehmot a hmot.majetku</div>
<div class="cell" style="left:312px;top:419px;width:27px;overflow:hidden;color:#000">A</div>
<div class="cell" style="left:342px;top:419px;width:129px;overflow:hidden;color:#000">Pořízení DM</div>
<div class="cell r" style="left:472px;width:27px;top:419px;color:#000">18</div>
<div class="cell r" style="left:502px;width:27px;top:419px;color:#000">0</div>
<div class="cell r" style="left:532px;width:27px;top:419px;color:#000">5</div>
<div class="cell r" style="left:562px;width:27px;top:419px;color:#000">0</div>
<div class="cell" style="left:594px;top:419px;width:249px;overflow:hidden;color:#000">Acquisition of tang.,intang.fixed assets</div>
<div class="cell" style="left:13px;top:439px;width:45px;overflow:hidden;color:#000">041</div>
<div class="cell" style="left:60px;top:439px;width:249px;overflow:hidden;color:#000">Pořízení dlouhodobého nehmotného majetku</div>
<div class="cell" style="left:312px;top:439px;width:27px;overflow:hidden;color:#000">A</div>
<div class="cell" style="left:342px;top:439px;width:129px;overflow:hidden;color:#000">Pořízení DNM</div>
<div class="cell r" style="left:472px;width:27px;top:439px;color:#000">19</div>
<div class="cell r" style="left:502px;width:27px;top:439px;color:#000">0</div>
<div class="cell r" style="left:532px;width:27px;top:439px;color:#000">4</div>
<div class="cell r" style="left:562px;width:27px;top:439px;color:#000">0</div>
<div class="cell" style="left:594px;top:439px;width:249px;overflow:hidden;color:#000">Acquisition of intangible fixed assets</div>
<div class="cell" style="left:13px;top:459px;width:45px;overflow:hidden;color:#000">042</div>
<div class="cell" style="left:60px;top:459px;width:249px;overflow:hidden;color:#000">Pořízení dlouhodobého hmotného majetku</div>
<div class="cell" style="left:312px;top:459px;width:27px;overflow:hidden;color:#000">A</div>
<div class="cell" style="left:342px;top:459px;width:129px;overflow:hidden;color:#000">Poříz.dlouh.hm.maj.</div>
<div class="cell r" style="left:472px;width:27px;top:459px;color:#000">20</div>
<div class="cell r" style="left:502px;width:27px;top:459px;color:#000">0</div>
<div class="cell r" style="left:532px;width:27px;top:459px;color:#000">5</div>
<div class="cell r" style="left:562px;width:27px;top:459px;color:#000">0</div>
<div class="cell" style="left:594px;top:459px;width:249px;overflow:hidden;color:#000">Acquisition of tangible fixed assets</div>
<div class="cell" style="left:13px;top:479px;width:45px;overflow:hidden;color:#000">043</div>
<div class="cell" style="left:60px;top:479px;width:249px;overflow:hidden;color:#000">Pořízení dlouhodobého finančního majetku</div>
<div class="cell" style="left:312px;top:479px;width:27px;overflow:hidden;color:#000">A</div>
<div class="cell" style="left:342px;top:479px;width:129px;overflow:hidden;color:#000">Pořízení fin.majetku</div>
<div class="cell r" style="left:472px;width:27px;top:479px;color:#000">29</div>
<div class="cell r" style="left:502px;width:27px;top:479px;color:#000">0</div>
<div class="cell r" style="left:532px;width:27px;top:479px;color:#000">6</div>
<div class="cell r" style="left:562px;width:27px;top:479px;color:#000">0</div>
<div class="cell" style="left:594px;top:479px;width:249px;overflow:hidden;color:#000">Acquisition of financial investments</div>
<div class="cell" style="left:13px;top:499px;width:45px;overflow:hidden;color:#000">050</div>
<div class="cell" style="left:60px;top:499px;width:249px;overflow:hidden;color:#000">Poskytnuté zálohy na dlouhodobý majetek</div>
<div class="cell" style="left:312px;top:499px;width:27px;overflow:hidden;color:#000">A</div>
<div class="cell" style="left:342px;top:499px;width:129px;overflow:hidden;color:#000">Poskytnuté zál.na IM</div>
<div class="cell r" style="left:472px;width:27px;top:499px;color:#000">0</div>
<div class="cell r" style="left:502px;width:27px;top:499px;color:#000">0</div>
<div class="cell r" style="left:532px;width:27px;top:499px;color:#000">0</div>
<div class="cell r" style="left:562px;width:27px;top:499px;color:#000">0</div>
<div class="cell" style="left:594px;top:499px;width:249px;overflow:hidden;color:#000">Prepayments for fixed assets</div>
<div class="cell" style="left:13px;top:519px;width:45px;overflow:hidden;color:#000">051</div>
<div class="cell" style="left:60px;top:519px;width:249px;overflow:hidden;color:#000">Poskytnuté zálohy na dlouh.nehm.majetek</div>
<div class="cell" style="left:312px;top:519px;width:27px;overflow:hidden;color:#000">A</div>
<div class="cell" style="left:342px;top:519px;width:129px;overflow:hidden;color:#000">Poskyt.zál.na NHM</div>
<div class="cell r" style="left:472px;width:27px;top:519px;color:#000">12</div>
<div class="cell r" style="left:502px;width:27px;top:519px;color:#000">0</div>
<div class="cell r" style="left:532px;width:27px;top:519px;color:#000">4</div>
<div class="cell r" style="left:562px;width:27px;top:519px;color:#000">0</div>
<div class="cell" style="left:594px;top:519px;width:249px;overflow:hidden;color:#000">Prepayments for intangible fixed assets</div>
<div class="cell" style="left:13px;top:539px;width:45px;overflow:hidden;color:#000">052</div>
<div class="cell" style="left:60px;top:539px;width:249px;overflow:hidden;color:#000">Poskytnuté zálohy na dlouh.hmot.majetek</div>
<div class="cell" style="left:312px;top:539px;width:27px;overflow:hidden;color:#000">A</div>
<div class="cell" style="left:342px;top:539px;width:129px;overflow:hidden;color:#000">Poskyt.zál.na HM</div>
<div class="cell r" style="left:472px;width:27px;top:539px;color:#000">21</div>
<div class="cell r" style="left:502px;width:27px;top:539px;color:#000">0</div>
<div class="cell r" style="left:532px;width:27px;top:539px;color:#000">5</div>
<div class="cell r" style="left:562px;width:27px;top:539px;color:#000">0</div>
<div class="cell" style="left:594px;top:539px;width:249px;overflow:hidden;color:#000">Prepayments for tangible fixed assets</div>
<div class="cell" style="left:13px;top:559px;width:45px;overflow:hidden;color:#000">053</div>
<div class="cell" style="left:60px;top:559px;width:249px;overflow:hidden;color:#000">Poskytnuté zálohy na dlouh.finanč.majet.</div>
<div class="cell" style="left:312px;top:559px;width:27px;overflow:hidden;color:#000">A</div>
<div class="cell" style="left:342px;top:559px;width:129px;overflow:hidden;color:#000">Poskyt.zál.-fin.maj.</div>
<div class="cell r" style="left:472px;width:27px;top:559px;color:#000">30</div>
<div class="cell r" style="left:502px;width:27px;top:559px;color:#000">0</div>
<div class="cell r" style="left:532px;width:27px;top:559px;color:#000">6</div>
<div class="cell r" style="left:562px;width:27px;top:559px;color:#000">0</div>
<div class="cell" style="left:594px;top:559px;width:249px;overflow:hidden;color:#000">Prepayments for financial investments</div>
<div class="cell" style="left:13px;top:579px;width:45px;overflow:hidden;color:#000">061</div>
<div class="cell" style="left:60px;top:579px;width:249px;overflow:hidden;color:#000">Podíly v ovládaných a řízených osobách</div>
<div class="cell" style="left:312px;top:579px;width:27px;overflow:hidden;color:#000">A</div>
<div class="cell" style="left:342px;top:579px;width:129px;overflow:hidden;color:#000">Podíly rozhodné</div>
<div class="cell r" style="left:472px;width:27px;top:579px;color:#000">24</div>
<div class="cell r" style="left:502px;width:27px;top:579px;color:#000">0</div>
<div class="cell r" style="left:532px;width:27px;top:579px;color:#000">6</div>
<div class="cell r" style="left:562px;width:27px;top:579px;color:#000">0</div>
<div class="cell" style="left:594px;top:579px;width:249px;overflow:hidden;color:#000">Investments with controlling influence</div>
<div class="a" style="left:844px;top:115px;width:18px;height:481px;background:linear-gradient(to right,#fff 0,#fff 1px,#F3F1EC 1px,#FEFEFB 60%,#FEFEFB 100%)"></div>
<div class="sbb" style="left:846px;top:116px"><svg class="a" style="left:1px;top:3px" width="9" height="6" viewBox="0 0 9 6" shape-rendering="crispEdges"><path d="M4 0h1v1h-1zM3 1h1v1h-1zM4 1h1v1h-1zM5 1h1v1h-1zM2 2h1v1h-1zM3 2h1v1h-1zM4 2h1v1h-1zM5 2h1v1h-1zM6 2h1v1h-1zM1 3h1v1h-1zM2 3h1v1h-1zM3 3h1v1h-1zM5 3h1v1h-1zM6 3h1v1h-1zM7 3h1v1h-1zM0 4h1v1h-1zM1 4h1v1h-1zM2 4h1v1h-1zM6 4h1v1h-1zM7 4h1v1h-1zM8 4h1v1h-1zM0 5h1v1h-1zM1 5h1v1h-1zM7 5h1v1h-1zM8 5h1v1h-1z" fill="#4D6185"/></svg></div>
<div class="sbb" style="left:846px;top:133px;height:14px"><div class="a" style="left:3px;top:3px;width:7px;height:7px;background:repeating-linear-gradient(to bottom,#8EA8E4 0,#8EA8E4 1px,#F0F5FE 1px,#F0F5FE 2px)"></div></div>
<div class="sbb" style="left:846px;top:579px"><svg class="a" style="left:1px;top:4px" width="9" height="6" viewBox="0 0 9 6" shape-rendering="crispEdges"><path d="M0 0h1v1h-1zM1 0h1v1h-1zM7 0h1v1h-1zM8 0h1v1h-1zM0 1h1v1h-1zM1 1h1v1h-1zM2 1h1v1h-1zM6 1h1v1h-1zM7 1h1v1h-1zM8 1h1v1h-1zM1 2h1v1h-1zM2 2h1v1h-1zM3 2h1v1h-1zM5 2h1v1h-1zM6 2h1v1h-1zM7 2h1v1h-1zM2 3h1v1h-1zM3 3h1v1h-1zM4 3h1v1h-1zM5 3h1v1h-1zM6 3h1v1h-1zM3 4h1v1h-1zM4 4h1v1h-1zM5 4h1v1h-1zM4 5h1v1h-1z" fill="#4D6185"/></svg></div>
<svg class="a" style="left:860px;top:609px" width="12" height="12" viewBox="0 0 12 12" shape-rendering="crispEdges"><path d="M0 11h1v1h-1zM1 10h1v1h-1zM1 11h1v1h-1zM2 9h1v1h-1zM2 10h1v1h-1zM3 8h1v1h-1zM3 9h1v1h-1zM4 7h1v1h-1zM4 8h1v1h-1zM4 11h1v1h-1zM5 6h1v1h-1zM5 7h1v1h-1zM5 10h1v1h-1zM5 11h1v1h-1zM6 5h1v1h-1zM6 6h1v1h-1zM6 9h1v1h-1zM6 10h1v1h-1zM7 4h1v1h-1zM7 5h1v1h-1zM7 8h1v1h-1zM7 9h1v1h-1zM8 3h1v1h-1zM8 4h1v1h-1zM8 7h1v1h-1zM8 8h1v1h-1zM8 11h1v1h-1zM9 2h1v1h-1zM9 3h1v1h-1zM9 6h1v1h-1zM9 7h1v1h-1zM9 10h1v1h-1zM9 11h1v1h-1zM10 1h1v1h-1zM10 2h1v1h-1zM10 5h1v1h-1zM10 6h1v1h-1zM10 9h1v1h-1zM10 10h1v1h-1zM11 0h1v1h-1zM11 1h1v1h-1zM11 4h1v1h-1zM11 5h1v1h-1zM11 8h1v1h-1zM11 9h1v1h-1z" fill="#C1BDAD"/><path d="M2 11h1v1h-1zM3 10h1v1h-1zM4 9h1v1h-1zM5 8h1v1h-1zM6 7h1v1h-1zM6 11h1v1h-1zM7 6h1v1h-1zM7 10h1v1h-1zM8 5h1v1h-1zM8 9h1v1h-1zM9 4h1v1h-1zM9 8h1v1h-1zM10 3h1v1h-1zM10 7h1v1h-1zM10 11h1v1h-1zM11 2h1v1h-1zM11 6h1v1h-1zM11 10h1v1h-1z" fill="#fff"/></svg>


<div id="dlg" class="a">
  <div id="dtitle" class="a"></div>
  <div id="dclient" class="a"></div>
</div>
<svg class="a" style="left:261px;top:167px" width="16" height="14" viewBox="0 0 16 14" shape-rendering="crispEdges"><rect x="11" y="0" width="1" height="1" fill="#F89020"/><rect x="12" y="0" width="3" height="1" fill="#E83820"/><rect x="8" y="1" width="1" height="1" fill="#000"/><rect x="10" y="1" width="1" height="1" fill="#FFD030"/><rect x="11" y="1" width="2" height="1" fill="#F89020"/><rect x="13" y="1" width="2" height="1" fill="#E83820"/><rect x="15" y="1" width="1" height="1" fill="#000"/><rect x="2" y="2" width="1" height="1" fill="#000"/><rect x="4" y="2" width="3" height="1" fill="#FFD030"/><rect x="8" y="2" width="1" height="1" fill="#000"/><rect x="10" y="2" width="1" height="1" fill="#FFD030"/><rect x="11" y="2" width="2" height="1" fill="#F89020"/><rect x="13" y="2" width="2" height="1" fill="#E83820"/><rect x="15" y="2" width="1" height="1" fill="#000"/><rect x="2" y="3" width="1" height="1" fill="#E83820"/><rect x="3" y="3" width="1" height="1" fill="#000"/><rect x="4" y="3" width="4" height="1" fill="#FFD030"/><rect x="8" y="3" width="1" height="1" fill="#000"/><rect x="9" y="3" width="2" height="1" fill="#FFD030"/><rect x="11" y="3" width="2" height="1" fill="#F89020"/><rect x="13" y="3" width="1" height="1" fill="#E83820"/><rect x="14" y="3" width="1" height="1" fill="#000"/><rect x="2" y="4" width="1" height="1" fill="#E83820"/><rect x="3" y="4" width="1" height="1" fill="#000"/><rect x="4" y="4" width="4" height="1" fill="#FFD030"/><rect x="8" y="4" width="1" height="1" fill="#000"/><rect x="9" y="4" width="2" height="1" fill="#FFD030"/><rect x="11" y="4" width="2" height="1" fill="#F89020"/><rect x="13" y="4" width="1" height="1" fill="#E83820"/><rect x="14" y="4" width="1" height="1" fill="#000"/><rect x="2" y="5" width="2" height="1" fill="#E83820"/><rect x="4" y="5" width="1" height="1" fill="#000"/><rect x="5" y="5" width="3" height="1" fill="#FFD030"/><rect x="8" y="5" width="1" height="1" fill="#000"/><rect x="9" y="5" width="2" height="1" fill="#FFD030"/><rect x="11" y="5" width="2" height="1" fill="#F89020"/><rect x="13" y="5" width="1" height="1" fill="#E83820"/><rect x="14" y="5" width="1" height="1" fill="#000"/><rect x="2" y="6" width="2" height="1" fill="#E83820"/><rect x="4" y="6" width="1" height="1" fill="#000"/><rect x="5" y="6" width="3" height="1" fill="#FFD030"/><rect x="8" y="6" width="1" height="1" fill="#000"/><rect x="9" y="6" width="2" height="1" fill="#FFD030"/><rect x="11" y="6" width="2" height="1" fill="#F89020"/><rect x="13" y="6" width="1" height="1" fill="#000"/><rect x="2" y="7" width="2" height="1" fill="#E83820"/><rect x="4" y="7" width="1" height="1" fill="#000"/><rect x="5" y="7" width="2" height="1" fill="#FFD030"/><rect x="7" y="7" width="1" height="1" fill="#000"/><rect x="8" y="7" width="3" height="1" fill="#FFD030"/><rect x="11" y="7" width="2" height="1" fill="#F89020"/><rect x="13" y="7" width="1" height="1" fill="#000"/><rect x="2" y="8" width="2" height="1" fill="#E83820"/><rect x="4" y="8" width="1" height="1" fill="#F89020"/><rect x="5" y="8" width="2" height="1" fill="#FFD030"/><rect x="7" y="8" width="1" height="1" fill="#000"/><rect x="8" y="8" width="3" height="1" fill="#FFD030"/><rect x="11" y="8" width="2" height="1" fill="#F89020"/><rect x="13" y="8" width="1" height="1" fill="#000"/><rect x="2" y="9" width="2" height="1" fill="#E83820"/><rect x="4" y="9" width="1" height="1" fill="#F89020"/><rect x="5" y="9" width="2" height="1" fill="#FFD030"/><rect x="7" y="9" width="1" height="1" fill="#000"/><rect x="8" y="9" width="3" height="1" fill="#FFD030"/><rect x="11" y="9" width="1" height="1" fill="#F89020"/><rect x="12" y="9" width="2" height="1" fill="#000"/><rect x="2" y="10" width="2" height="1" fill="#fff"/><rect x="4" y="10" width="3" height="1" fill="#F89020"/><rect x="7" y="10" width="1" height="1" fill="#000"/><rect x="8" y="10" width="2" height="1" fill="#F89020"/><rect x="10" y="10" width="3" height="1" fill="#000"/><rect x="13" y="10" width="1" height="1" fill="#fff"/><rect x="1" y="11" width="1" height="1" fill="#fff"/><rect x="2" y="11" width="1" height="1" fill="#000"/><rect x="3" y="11" width="2" height="1" fill="#fff"/><rect x="5" y="11" width="2" height="1" fill="#000"/><rect x="7" y="11" width="2" height="1" fill="#fff"/><rect x="9" y="11" width="1" height="1" fill="#000"/><rect x="10" y="11" width="2" height="1" fill="#fff"/><rect x="12" y="11" width="1" height="1" fill="#000"/><rect x="13" y="11" width="1" height="1" fill="#fff"/><rect x="14" y="11" width="1" height="1" fill="#000"/><rect x="1" y="12" width="1" height="1" fill="#000"/><rect x="2" y="12" width="2" height="1" fill="#fff"/><rect x="4" y="12" width="1" height="1" fill="#000"/><rect x="5" y="12" width="2" height="1" fill="#fff"/><rect x="7" y="12" width="1" height="1" fill="#000"/><rect x="8" y="12" width="2" height="1" fill="#fff"/><rect x="10" y="12" width="1" height="1" fill="#000"/><rect x="11" y="12" width="1" height="1" fill="#fff"/><rect x="12" y="12" width="2" height="1" fill="#000"/><rect x="2" y="13" width="2" height="1" fill="#000"/><rect x="5" y="13" width="2" height="1" fill="#000"/><rect x="9" y="13" width="1" height="1" fill="#000"/><rect x="12" y="13" width="1" height="1" fill="#000"/></svg>
<div class="t cap" style="left:280px;top:168px;color:#fff;letter-spacing:-0.05px">Účet účetní osnovy - oprava</div>
<div class="xb dx" style="left:590px;top:164px">
  <svg class="a" style="left:3px;top:3px" width="13" height="13" viewBox="0 0 13 13"><path d="M1.3 1.3L11.7 11.7M11.7 1.3L1.3 11.7" stroke="#fff" stroke-width="2.4"/></svg>
</div>
<div class="t" style="left:272px;top:203px">Číslo účtu:</div>
<div class="edit" style="left:347px;top:202px;width:65px;height:21px;background:#ECE9D8"><div></div></div>
<div class="t" style="left:350px;top:206px;color:#ACA899">010</div>
<div class="t" style="left:429px;top:203px">Typ účtu:</div>
<div class="edit" style="left:484px;top:202px;width:112px;height:21px"><div></div></div>
<div class="a" style="left:487px;top:205px;width:90px;height:15px;background:#316AC5"></div>
<div class="t" style="left:488px;top:207px;color:#fff">A - aktivní</div>
<div class="a" style="left:578px;top:204px;width:17px;height:17px;background:#ECE9D8;border-top:1px solid #F1EFE2;border-left:1px solid #F1EFE2;border-right:1px solid #716F64;border-bottom:1px solid #716F64"><div class="a" style="left:0;top:0;right:0;bottom:0;border-top:1px solid #fff;border-left:1px solid #fff;border-right:1px solid #ACA899;border-bottom:1px solid #ACA899"></div>
<svg class="a" style="left:4px;top:6px" width="8" height="5" viewBox="0 0 8 5" shape-rendering="crispEdges"><path d="M0 0h7v1h-1v1h-1v1h-1v1h-1v-1h-1v-1h-1v-1h-1z" fill="#000"/></svg></div>
<div class="t" style="left:272px;top:235px">Název - popis:</div>
<div class="edit" style="left:347px;top:234px;width:249px;height:21px"><div></div></div>
<div class="t" style="left:350px;top:237px">Dlouhodobý nehmotný majetek</div>
<div class="t" style="left:272px;top:255px">V cizím jazyce:</div>
<div class="edit" style="left:347px;top:254px;width:249px;height:21px"><div></div></div>
<div class="t" style="left:350px;top:257px">Intangible fixed assets</div>
<div class="t" style="left:272px;top:285px">Zkrácený popis doplňovaný na doklady:</div>
<div class="edit" style="left:467px;top:283px;width:129px;height:21px"><div></div></div>
<div class="t" style="left:470px;top:287px">Dlouh.nehmot.majetek</div>
<div class="a" style="left:272px;top:317px;width:323px;height:61px;border:1px solid #ACA899;box-shadow:inset 1px 1px 0 #fff, 1px 1px 0 #fff"></div>
<div class="t" style="left:278px;top:312px;background:#ECE9D8;padding:0 2px 0 3px;letter-spacing:-0.1px">Číslo řádku výsledovky-rozvahy---Běžný sloupec nebo sl.korekce</div>
<div class="t" style="left:304px;top:331px">- č.ř. v rozsahu úplném:</div>
<div class="t" style="left:304px;top:351px">- č.ř. v rozsahu zkráceném:</div>
<div class="edit" style="left:464px;top:330px;width:39px;height:20px"><div></div></div>
<div class="t" style="left:470px;top:334px">10</div>
<div class="edit" style="left:464px;top:350px;width:39px;height:21px"><div></div></div>
<div class="t" style="left:473px;top:354px">4</div>
<div class="edit" style="left:541px;top:330px;width:41px;height:20px"><div></div></div>
<div class="t" style="left:550px;top:334px">0</div>
<div class="edit" style="left:541px;top:350px;width:41px;height:21px"><div></div></div>
<div class="t" style="left:550px;top:354px">0</div>
<div class="edit" style="left:272px;top:392px;width:13px;height:13px"><div></div></div>
<div class="t" style="left:290px;top:393px">Skupinový - nadřízený účet, na který se nesmí účtovat</div>
<div class="btn" style="left:416px;top:418px;width:81px;height:24px"><div style="line-height:22px">O.K.</div></div>
<div class="btn" style="left:512px;top:418px;width:81px;height:24px"><div style="line-height:22px">Storno</div></div>
</div></body></html>
